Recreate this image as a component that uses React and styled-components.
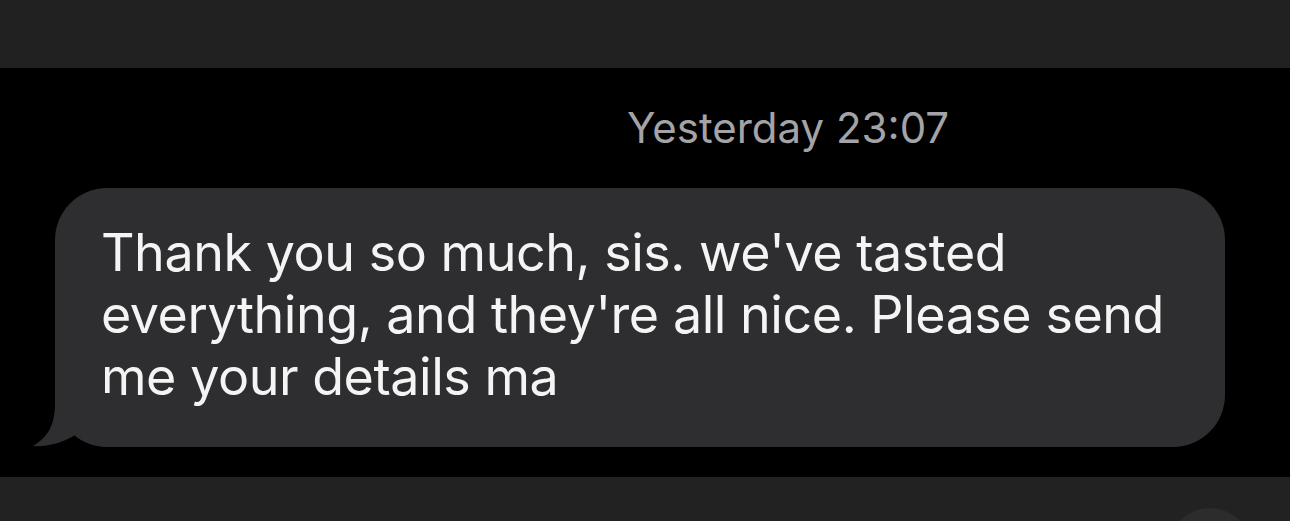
import React from 'react';
import styled, { createGlobalStyle } from 'styled-components';

const GlobalStyle = createGlobalStyle`
  html, body {
    margin: 0;
    padding: 0;
    background: #000;
  }
  body {
    font-family: Inter, "Noto Sans", "Liberation Sans", sans-serif;
    -webkit-font-smoothing: antialiased;
  }
`;

const Screen = styled.div`
  width: 1290px;
  height: 521px;
  display: flex;
  flex-direction: column;
  overflow: hidden;
  background: #000;
`;

const TopBar = styled.div`
  height: 68px;
  flex-shrink: 0;
  background: #212121;
`;

const Thread = styled.div`
  height: 409px;
  flex-shrink: 0;
  display: flex;
  flex-direction: column;
  background: #000;
`;

const Stamp = styled.div`
  margin: 35px 0 0 627px;
  height: 85px;
  font-size: 42px;
  line-height: 50px;
  color: #a3a3a8;
  white-space: nowrap;
`;

const Bubble = styled.div`
  position: relative;
  margin-left: 55px;
  width: 1170px;
  height: 259px;
  box-sizing: border-box;
  padding: 34px 0 0 46px;
  border-radius: 52px;
  background: #2e2e30;
`;

const Tail = styled.svg`
  position: absolute;
  left: -25px;
  bottom: 0;
  width: 80px;
  height: 54px;
`;

const Line = styled.div`
  font-size: 52px;
  line-height: 62px;
  letter-spacing: -0.45px;
  color: #f4f4f4;
  white-space: nowrap;
`;

const BottomBar = styled.div`
  flex: 1;
  display: flex;
  justify-content: flex-end;
  padding: 31px 39px 0 0;
  background: #222222;
`;

const RoundButton = styled.div`
  width: 82px;
  height: 82px;
  flex-shrink: 0;
  border-radius: 50%;
  background: #2c2c2c;
`;

const lines = [
  "Thank you so much, sis. we've tasted",
  "everything, and they're all nice. Please send",
  'me your details ma',
];

export default function App() {
  return (
    <Screen>
      <GlobalStyle />
      <TopBar />
      <Thread>
        <Stamp>Yesterday 23:07</Stamp>
        <Bubble>
          <Tail viewBox="0 0 80 54">
            <path
              d="M25 0 L25 10 C25 32 18 44 3 53 C18 54 36 49 48 40 C58 48 68 54 80 54 L80 0 Z"
              fill="#2e2e30"
            />
          </Tail>
          {lines.map((l) => (
            <Line key={l}>{l}</Line>
          ))}
        </Bubble>
      </Thread>
      <BottomBar>
        <RoundButton />
      </BottomBar>
    </Screen>
  );
}
